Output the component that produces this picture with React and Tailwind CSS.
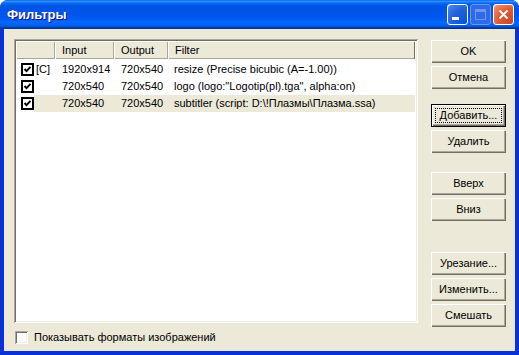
import React from "react";

const font = { fontFamily: '"Liberation Sans", Arial, sans-serif' };

function Btn({ children, focus }) {
  return (
    <div
      className={
        "relative flex h-[23px] w-[75px] items-center justify-center bg-[#ECE9D8] text-[11px] leading-[13px] text-black " +
        (focus
          ? "shadow-[inset_1px_1px_#000,inset_-1px_-1px_#000,inset_2px_2px_#fff,inset_-2px_-2px_#716f64,inset_-3px_-3px_#aca899]"
          : "shadow-[inset_1px_1px_#fff,inset_-1px_-1px_#716f64,inset_-2px_-2px_#aca899]")
      }
    >
      {focus && (
        <div className="absolute inset-[4px] border border-dotted border-black" />
      )}
      <span className="relative">{children}</span>
    </div>
  );
}

function ListCheck() {
  return (
    <div className="flex h-[13px] w-[13px] items-center justify-center border-2 border-black bg-white">
      <svg width="9" height="9" viewBox="0 0 9 9">
        <polyline points="1.5,4 3.5,6.2 7.5,1.8" fill="none" stroke="#000" strokeWidth="1.9" />
      </svg>
    </div>
  );
}

const rows = [
  { c: "[C]", i: "1920x914", o: "720x540", f: "resize (Precise bicubic (A=-1.00))" },
  { c: "", i: "720x540", o: "720x540", f: 'logo (logo:"Logotip(pl).tga", alpha:on)' },
  { c: "", i: "720x540", o: "720x540", f: "subtitler (script: D:\\!Плазмы\\Плазма.ssa)", sel: true },
];

export default function App() {
  return (
    <div className="h-[355px] w-[519px] bg-white" style={font}>
      <div className="flex h-full w-full flex-col overflow-hidden rounded-t-[8px] bg-[#0831D9]">
        {/* Title bar */}
        <div className="flex h-[29px] shrink-0 items-center bg-[linear-gradient(to_bottom,#0058ee_0%,#3593ff_4%,#288eff_6%,#127dff_8%,#036ffc_10%,#0262ee_14%,#0057e5_20%,#0054e3_24%,#0055eb_56%,#005bf5_66%,#026afe_76%,#0062ef_86%,#0052d6_92%,#0040ab_94%,#003092_100%)] pl-[7px] pr-[5px]">
          <span className="text-[13px] font-bold text-white [text-shadow:1px_1px_#0f1089]">
            Фильтры
          </span>
          <div className="ml-auto flex gap-[2px]">
            <div className="relative h-[21px] w-[21px] rounded-[3px] border border-white bg-[radial-gradient(circle_at_90%_90%,#0054e9_0%,#2263d5_55%,#4480f6_90%,#fff_100%)]">
              <div className="absolute left-[4px] top-[12px] h-[3px] w-[7px] bg-white" />
            </div>
            <div className="relative h-[21px] w-[21px] rounded-[3px] border border-[#6b97ef] bg-[#2e6ae8]">
              <div className="absolute left-[4px] top-[4px] h-[11px] w-[11px] border border-t-[3px] border-[#6b97ef]" />
            </div>
            <div className="relative flex h-[21px] w-[21px] items-center justify-center rounded-[3px] border border-white bg-[radial-gradient(circle_at_90%_90%,#cc4628_0%,#e35a33_55%,#f08a6b_90%,#fff_100%)]">
              <svg width="11" height="11" viewBox="0 0 11 11">
                <path d="M1.5 1.5 L9.5 9.5 M9.5 1.5 L1.5 9.5" stroke="#fff" strokeWidth="2" />
              </svg>
            </div>
          </div>
        </div>

        {/* Client */}
        <div className="mx-[4px] mb-[4px] flex flex-1 flex-col bg-[#ECE9D8] pl-[10px] pt-[10px]">
          <div className="flex items-start">
            {/* List */}
            <div className="h-[284px] w-[404px] bg-white shadow-[inset_1px_1px_#aca899,inset_-1px_-1px_#fff,inset_2px_2px_#716f64,inset_-2px_-2px_#f1efe2] p-[2px]">
              <div className="flex h-[18px] w-[399px] bg-[#ECE9D8] text-[11px] leading-[13px] text-black shadow-[inset_0_-1px_#aca899]">
                <div className="h-full w-[39px] shadow-[inset_1px_1px_#fff,inset_-1px_0_#aca899]" />
                <div className="flex h-full w-[59px] items-center pl-[7px] shadow-[inset_1px_1px_#fff,inset_-1px_0_#aca899]">Input</div>
                <div className="flex h-full w-[54px] items-center pl-[7px] shadow-[inset_1px_1px_#fff,inset_-1px_0_#aca899]">Output</div>
                <div className="flex h-full flex-1 items-center pl-[7px] shadow-[inset_1px_1px_#fff,inset_-1px_0_#716f64,inset_0_-1px_#aca899]">Filter</div>
              </div>
              <div className="mt-[2px] flex flex-col text-[11px] leading-[13px] text-black">
                {rows.map((r, k) => (
                  <div key={k} className="flex h-[17px] w-[399px] items-center">
                    <div className="flex w-[18px] shrink-0 justify-end">
                      <ListCheck />
                    </div>
                    <div className={"flex h-full flex-1 items-center " + (r.sel ? "bg-[#ECE9D8]" : "")}>
                      <div className="w-[21px] pl-[2px]">{r.c}</div>
                      <div className="w-[59px] pl-[7px]">{r.i}</div>
                      <div className="w-[54px] pl-[7px]">{r.o}</div>
                      <div className="flex-1 whitespace-nowrap pl-[6px]">{r.f}</div>
                    </div>
                  </div>
                ))}
              </div>
            </div>

            {/* Buttons */}
            <div className="ml-[13px] flex flex-col pt-[1px]">
              <div className="flex flex-col gap-[3px]">
                <Btn>OK</Btn>
                <Btn>Отмена</Btn>
              </div>
              <div className="mt-[15px] flex flex-col gap-[3px]">
                <Btn focus>Добавить...</Btn>
                <Btn>Удалить</Btn>
              </div>
              <div className="mt-[19px] flex flex-col gap-[3px]">
                <Btn>Вверх</Btn>
                <Btn>Вниз</Btn>
              </div>
              <div className="mt-[31px] flex flex-col gap-[3px]">
                <Btn>Урезание...</Btn>
                <Btn>Изменить...</Btn>
                <Btn>Смешать</Btn>
              </div>
            </div>
          </div>

          {/* Bottom checkbox */}
          <div className="mt-[4px] flex h-[13px] items-center">
            <div className="ml-[1px] h-[13px] w-[13px] bg-white shadow-[inset_1px_1px_#aca899,inset_-1px_-1px_#fff,inset_2px_2px_#716f64,inset_-2px_-2px_#f1efe2]" />
            <span className="ml-[6px] text-[11px] leading-[13px] text-black">Показывать форматы изображений</span>
          </div>
        </div>
      </div>
    </div>
  );
}
